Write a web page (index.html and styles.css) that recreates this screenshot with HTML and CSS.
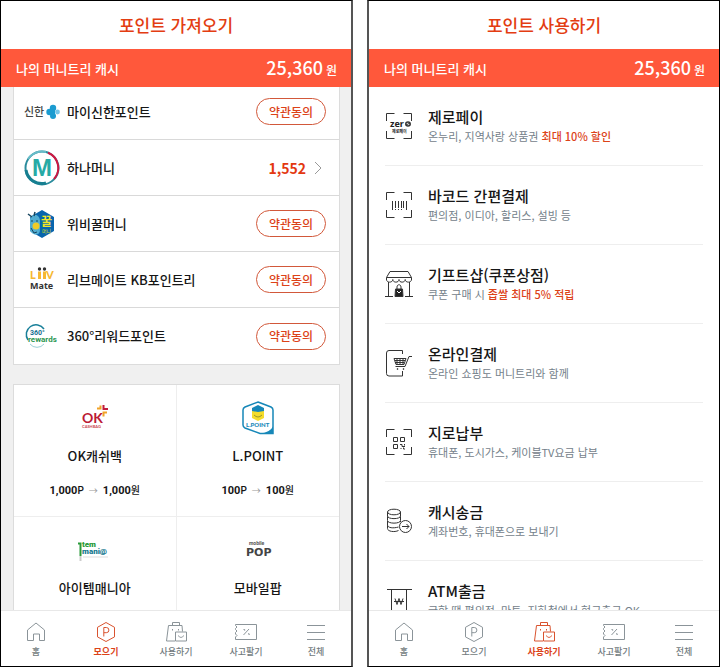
FILE: index.html
```html
<!DOCTYPE html>
<html lang="ko">
<head>
<meta charset="utf-8">
<meta name="viewport" content="width=device-width, initial-scale=1">
<title>머니트리 포인트</title>
<link rel="stylesheet" href="styles.css">
</head>
<body>
<svg class="defs" aria-hidden="true">
  <symbol id="home" viewBox="0 0 24 24"><path d="M3.500 20.500V10L12 3l8.500 7v10.500h-5V14h-6v6.500z"/></symbol>
  <symbol id="collect" viewBox="0 0 24 24"><path d="M12 2.500l8.500 4.800v9.600L12 21.500l-8.500-4.600V7.300zM9.800 16.500v-9h2.500a2.600 2.600 0 0 1 0 5.200H9.800"/></symbol>
  <symbol id="spend" viewBox="0 0 24 24"><path d="M8.500 5.500V2.500h7v3M11 21H2.500L4.500 5.500h13.500l.5 6M8.500 9v1.500M14.500 9v1.500M11.500 12h11v9h-11zM14.500 15.500c.5 2.500 4.500 2.500 5 0"/></symbol>
  <symbol id="trade" viewBox="0 0 24 24"><path d="M1.500 4.500h21v15h-21v-2.500l1.500-1.500-1.500-1.500v-1.500L3 11l-1.500-1.500V8.500L3 7 1.500 5.500zM15 9l-5.500 6M9.500 9.500h1.200v1.200M14 13.800h1.200V15"/></symbol>
  <symbol id="menu" viewBox="0 0 24 24"><path d="M3 5.500h18M3 12.500h18M3 19.500h18"/></symbol>
  <symbol id="corners" viewBox="0 0 28 28"><path d="M1.500 9V1.500h8M18.500 1.500h8V9M26.500 19v7.500h-8M9.500 26.500h-8V19"/></symbol>
</svg>
<div class="screens">

<main class="phone collect">
  <header class="title"><h1>포인트 가져오기</h1></header>
  <div class="balance"><span>나의 머니트리 캐시</span><strong>25,360<small>원</small></strong></div>
  <div class="content">
    <ul class="panel accounts">
      <li>
        <svg class="logo" viewBox="0 0 36 36"><text x="0" y="22" class="shinhan">신한</text><g fill="#1b9bd0"><circle cx="29" cy="14" r="3.200"/><circle cx="25.500" cy="18" r="3.200"/><circle cx="29" cy="22" r="3"/><path d="M27 14h4v8h-4z"/></g><circle cx="33.500" cy="18" r="2.400" fill="#75c5e8"/></svg>
        <span>마이신한포인트</span><button type="button">약관동의</button>
      </li>
      <li>
        <svg class="logo" viewBox="0 0 36 36" fill="none"><circle cx="18" cy="18" r="16.500" stroke="#2b8c9d" stroke-width="2"/><path d="M4 9A16.500 16.500 0 0 1 22 2" stroke="#67bcc8" stroke-width="2"/><path d="M24 2.700A16.500 16.500 0 0 1 30 29" stroke="#cf1742" stroke-width="2"/><path d="M2 20A16 16 0 0 0 22 33" stroke="#177f91" stroke-width="3"/><text x="8" y="26" class="hana">M</text></svg>
        <span>하나머니</span><a class="amount" href="#hana">1,552<svg viewBox="0 0 8 14"><path d="M1 1l6 6-6 6"/></svg></a>
      </li>
      <li>
        <svg class="logo" viewBox="0 0 36 36"><path d="M18 4l12 7v14l-12 7-12-7V11z" fill="#0865ad"/><path d="M6 14c0-7 9-7 10 0v10c0 7-9 5-10 0z" fill="#51add1"/><path d="M4 8l4 3M11 6l-1 4" stroke="#17455f" stroke-width="1.500"/><circle cx="12" cy="20" r="3.500" fill="#f0cb27"/><path d="M7 15h2m3 0h2M7 22l3 5 3-1" stroke="#17455f" fill="none"/><text x="17" y="20" class="honey">꿀</text><text x="18" y="27" class="tiny-yellow">머니</text></svg>
        <span>위비꿀머니</span><button type="button">약관동의</button>
      </li>
      <li>
        <svg class="logo" viewBox="0 0 36 36" fill="none"><text x="6" y="17" class="liiv">L</text><path d="M15.500 9.500v7.500M20.500 9.500v7.500" stroke="#f6b832" stroke-width="3"/><text x="22" y="17" class="liiv">V</text><circle cx="15.500" cy="7" r="1.700" fill="#333"/><circle cx="20.500" cy="7" r="1.700" fill="#333"/><text x="6" y="27" class="mate">Mate</text></svg>
        <span>리브메이트 KB포인트리</span><button type="button">약관동의</button>
      </li>
      <li>
        <svg class="logo" viewBox="0 0 36 36" fill="none"><path d="M20 11A9.500 9.500 0 1 0 4 22" stroke="#187f99" stroke-width="1.500"/><path d="M6 26A9 9 0 0 0 20 26" stroke="#9bd0d6"/><text x="6" y="17" class="reward-number">360°</text><text x="4" y="24" class="reward-name">rewards</text></svg>
        <span>360°리워드포인트</span><button type="button">약관동의</button>
      </li>
    </ul>
    <ul class="panel partners">
      <li>
        <svg class="brand" viewBox="0 0 36 36"><text x="5" y="23" class="ok">OK</text><text x="5" y="28" class="cashbag">CASHBAG</text><g fill="none" stroke-width="2"><path d="M20 8.500h3.500V5.500" stroke="#f1a328"/><path d="M26.500 5v4H31" stroke="#c11d3d"/><path d="M30 12.500h-3.500v4" stroke="#f1a328"/></g></svg>
        <h2>OK캐쉬백</h2><p><b>1,000</b>P<i>→</i><b>1,000</b>원</p>
      </li>
      <li>
        <svg class="brand" viewBox="0 0 36 36"><path d="M18 2l13 5q2 1 2 3v23.500H20L5 28q-2-1-2-3V10q0-2 2-3z" fill="#fff" stroke="#1687b8" stroke-width="1.500"/><path d="M20 33.500q10-1 13-7v7z" fill="#1687b8"/><path d="M12 9l6-3 6 3v9l-6 3-6-3z" fill="#f5dc2a"/><path d="M12 8l6-3 6 3v3l-6 1-6-1z" fill="#1687b8"/><path d="M14 15q4 4 8 0" fill="none" stroke="#9b9727"/><text x="6" y="27" class="lpoint">L.POINT</text></svg>
        <h2>L.POINT</h2><p><b>100</b>P<i>→</i><b>100</b>원</p>
      </li>
      <li>
        <svg class="brand" viewBox="0 0 36 36"><path d="M1 11.500h2.500V24" stroke="#2a9a3a" stroke-width="2" fill="none"/><path d="M3.500 24v5" stroke="#ccc" stroke-width="2"/><path d="M6 25h25" stroke="#ddd"/><text x="5" y="15" class="item">tem</text><text x="5" y="22" class="mania">mani@</text></svg>
        <h2>아이템매니아</h2>
      </li>
      <li>
        <svg class="brand" viewBox="0 0 36 36"><text x="9" y="13" class="mobile">mobile</text><text x="6" y="24" class="pop">POP</text></svg>
        <h2>모바일팝</h2>
      </li>
    </ul>
  </div>
  <nav>
    <a href="#home"><svg><use href="#home"/></svg>홈</a>
    <a href="#collect" class="on" aria-current="page"><svg><use href="#collect"/></svg>모으기</a>
    <a href="#spend"><svg><use href="#spend"/></svg>사용하기</a>
    <a href="#trade"><svg><use href="#trade"/></svg>사고팔기</a>
    <a href="#menu"><svg><use href="#menu"/></svg>전체</a>
  </nav>
</main>

<main class="phone use">
  <header class="title"><h1>포인트 사용하기</h1></header>
  <div class="balance"><span>나의 머니트리 캐시</span><strong>25,360<small>원</small></strong></div>
  <div class="content">
    <ul class="services">
      <li><svg viewBox="0 0 28 28"><use href="#corners"/><text x="5" y="15" class="zero">zer</text><ellipse cx="23" cy="12" rx="2.200" ry="2" stroke-width="1.500"/><path d="M21 13l4-2"/><text x="7" y="21" class="zero-pay">제로페이</text></svg><div><h2>제로페이</h2><p>온누리, 지역사랑 상품권 <em>최대 10% 할인</em></p></div></li>
      <li><svg viewBox="0 0 28 28"><use href="#corners"/><path d="M7.500 10v9M10.500 10v7M13.500 10v7M16.500 10v7M18.500 10v7M21.500 10v9M10.500 18v1M13.500 18v1M16.500 18v1"/></svg><div><h2>바코드 간편결제</h2><p>편의점, 이디아, 할리스, 설빙 등</p></div></li>
      <li><svg viewBox="0 0 28 28"><path d="M5 1.500h18l3.500 6v2.500M1.500 10V7.500L5 1.500M1.500 7.500h25M1.500 9.500c0 3.500 6.300 3.500 6.300 0 0 3.500 6.200 3.500 6.200 0 0 3.500 6.200 3.500 6.200 0 0 3.500 6.300 3.500 6.300 0M3.500 12v14M24.500 12v14M0 26.500h8M20 26.500h8M12 19v-2c0-3 4-3 4 0v2"/><path d="M10.500 19h7l.5 7.500h-8z" fill="#222"/><path d="M12 21l2 2 2-2" stroke="#fff"/></svg><div><h2>기프트샵(쿠폰상점)</h2><p>쿠폰 구매 시 <em>좁쌀 최대 5% 적립</em></p></div></li>
      <li><svg viewBox="0 0 28 28"><path d="M17.500 5V1.500H4Q1.500 1.500 1.500 4v20.500Q1.500 27 4 27h13.500v-5M27 7.500h-3l-4 10H10.500M9 9.500h12l-2 6h-8zM12 10v5M15 10v5M18 10v5M10 11.500h10M10 13.500h9"/><circle cx="12.500" cy="20" r=".5"/><circle cx="18.500" cy="20" r=".5"/></svg><div><h2>온라인결제</h2><p>온라인 쇼핑도 머니트리와 함께</p></div></li>
      <li><svg viewBox="0 0 28 28"><use href="#corners"/><path d="M8.500 9.500h4v4h-4zM15.500 9.500h4v4h-4zM8.500 16.500h4v4h-4zM15 16.500h2v2h3M19.500 16v1.500M15.500 20.500h1M18.500 19.500v1.500h1.500"/></svg><div><h2>지로납부</h2><p>휴대폰, 도시가스, 케이블TV요금 납부</p></div></li>
      <li><svg viewBox="0 0 28 28"><ellipse cx="9" cy="5" rx="6.500" ry="2.800"/><path d="M2.500 5v4c0 3.500 13 3.500 13 0V5M2.500 9.500v4c0 3.500 13 3.500 13 0v-4M2.500 14v4c0 3 6 3.500 11 2M2.500 18.500v3c0 3 7 4 11 2M15.500 14v1"/><circle cx="20.500" cy="19.500" r="6" fill="#fff"/><path d="M17 19.500h7M21.500 17l2.500 2.500-2.500 2.500"/></svg><div><h2>캐시송금</h2><p>계좌번호, 휴대폰으로 보내기</p></div></li>
      <li><svg viewBox="0 0 28 28"><path d="M2 3.500h25M6.500 3.500V27h15V3.500M10 12.500l2 6 2-6 2 6 2-6M9 15.500h10"/></svg><div><h2>ATM출금</h2><p>급할 땐 편의점, 마트, 지하철에서 현금출금 OK</p></div></li>
    </ul>
  </div>
  <nav>
    <a href="#home"><svg><use href="#home"/></svg>홈</a>
    <a href="#collect"><svg><use href="#collect"/></svg>모으기</a>
    <a href="#spend" class="on" aria-current="page"><svg><use href="#spend"/></svg>사용하기</a>
    <a href="#trade"><svg><use href="#trade"/></svg>사고팔기</a>
    <a href="#menu"><svg><use href="#menu"/></svg>전체</a>
  </nav>
</main>
</div>
</body>
</html>
```
FILE: styles.css
```css
* { box-sizing: border-box; }
body { margin: 0; background: #fff; color: #161616; font-family: "Noto Sans CJK KR", sans-serif; }
h1, h2, p, ul { margin: 0; padding: 0; }
ul { list-style: none; }
a { color: inherit; text-decoration: none; }
.defs { display: none; }
.screens { display: grid; grid-template-columns: 1fr 1fr; gap: 14px; height: 100vh; }
.phone { display: flex; flex-direction: column; min-width: 0; min-height: 0; border: 1px solid #000; }
.collect { border-right: 2px solid #555; }
.use { border-left: 2px solid #555; }
.title { display: flex; flex: none; align-items: center; justify-content: center; height: 48px; }
.title h1 { color: #e33d12; font-size: 17px; font-weight: 500; line-height: 24px; }
.balance { display: flex; flex: none; align-items: center; justify-content: space-between; height: 38px; padding: 0 14px 0 15px; background: #ff583b; color: #fff; font-size: 13px; font-weight: 500; }
.balance strong { font-size: 18px; font-weight: 500; line-height: 24px; }
.balance small { margin-left: 3px; font-size: 12px; }
.content { flex: 1; min-height: 0; overflow: hidden; }

.collect .content { padding: 0 11px 0 12px; background: #f0f0f0; }
.panel { border: 1px solid #dcdcdc; background: #fff; }
.accounts { margin-top: -4px; }
.accounts li { display: flex; align-items: center; gap: 7px; height: 56px; padding: 0 13px 0 10px; border-bottom: 1px solid #d9d9d9; font-size: 13px; font-weight: 500; line-height: 18px; }
.accounts li:last-child { border-bottom: 0; }
.accounts span { flex: 1; }
.accounts button { width: 70px; height: 27px; padding: 0; border: 1px solid #d2583a; border-radius: 14px; background: #fff; color: #dc4218; font: 500 12px/20px "Noto Sans CJK KR", sans-serif; }
.logo, .brand { flex: none; width: 36px; height: 36px; }
.amount { display: flex; align-items: center; gap: 8px; padding-right: 4px; color: #e33810; font-size: 14px; font-weight: 700; }
.amount svg { width: 8px; height: 14px; fill: none; stroke: #999; }
.partners { display: grid; grid-template-columns: 1fr 1fr; margin-top: 19px; }
.partners li { display: flex; flex-direction: column; align-items: center; height: 132px; padding-top: 15px; border-bottom: 1px solid #eee; }
.partners li:nth-child(odd) { border-right: 1px solid #eee; }
.partners h2 { margin-top: 10px; font-size: 13px; font-weight: 500; line-height: 20px; }
.partners p { margin-top: 15px; font-family: Roboto, "Noto Sans CJK KR", sans-serif; font-size: 10px; font-weight: 500; line-height: 20px; }
.partners b { font-size: 11px; }
.partners i { margin: 0 5px; color: #999; font-size: 9px; font-style: normal; font-weight: 400; }

.services { padding: 0 16px; }
.services li { display: flex; gap: 15px; height: 79px; padding-top: 20px; border-bottom: 1px solid #eee; }
.services svg { flex: none; width: 28px; height: 28px; margin-top: 5px; fill: none; stroke: #333; }
.services h2 { font-size: 15px; font-weight: 500; line-height: 20px; white-space: nowrap; }
.services p { color: #74818a; font-size: 11px; line-height: 18px; white-space: nowrap; }
.services em { color: #dc4218; font-style: normal; font-weight: 500; }

nav { display: flex; flex: none; height: 56px; border-top: 1px solid #e8e8e8; background: #fff; color: #727b80; }
nav a { display: flex; flex: 1; flex-direction: column; align-items: center; padding-top: 9px; font-size: 9px; font-weight: 500; line-height: 14px; gap: 1px; }
nav svg { width: 24px; height: 24px; fill: none; stroke: #8b9499; }
nav .on { color: #dc4218; font-weight: 700; }
nav .on svg { stroke: #d9532f; }

svg text { stroke: none; fill: #222; font-family: "Noto Sans CJK KR", sans-serif; }
svg .shinhan { fill: #444; font-size: 11px; font-weight: 500; }
svg .hana { fill: #27aaa5; font: 700 24px "Liberation Sans", sans-serif; }
svg .honey { fill: #f2e52c; font-size: 12px; font-weight: 700; }
svg .tiny-yellow { fill: #b8ce3c; font-size: 5px; }
svg .liiv { fill: #f6b832; font: 900 11px Lato, sans-serif; }
svg .mate { fill: #333; font: 700 9px "Noto Sans", sans-serif; }
svg .reward-number { fill: #156f92; font: 700 7px Roboto, sans-serif; }
svg .reward-name { fill: #2b9650; font: 700 8px Roboto, sans-serif; }
svg .ok { fill: #bb1a35; font: 700 14px Lato, sans-serif; }
svg .cashbag { fill: #ca4852; font: 700 4px Lato, sans-serif; }
svg .lpoint { fill: #1687b8; font: 900 6px Lato, sans-serif; }
svg .item { fill: #2a9a3a; font: 900 8px Roboto, sans-serif; }
svg .mania { fill: #177a91; font: 900 8px Roboto, sans-serif; }
svg .mobile { fill: #555; font: 700 5px Roboto, sans-serif; }
svg .pop { fill: #444; font: 700 11px "DejaVu Sans", sans-serif; }
svg .zero { font: 700 9px "Noto Sans", sans-serif; }
svg .zero-pay { font-size: 4px; font-weight: 700; }
```
